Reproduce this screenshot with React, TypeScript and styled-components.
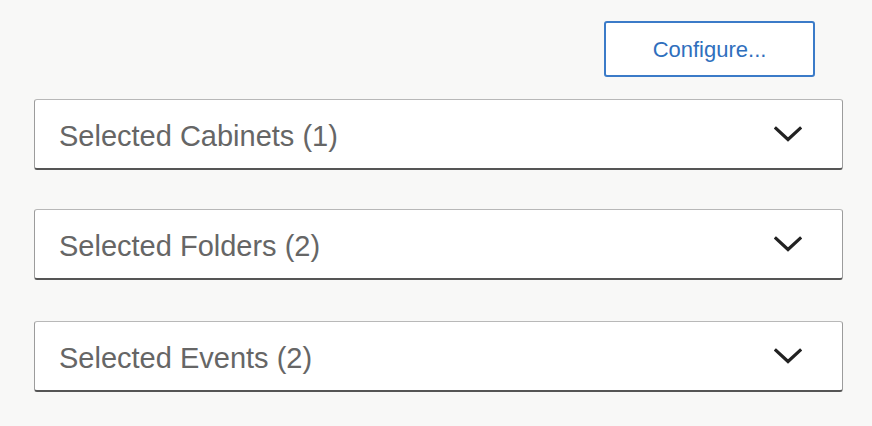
import React from "react";
import styled, { createGlobalStyle } from "styled-components";

const Global = createGlobalStyle`
  html, body { margin: 0; padding: 0; background: #f8f8f7; }
  body { font-family: "Liberation Sans", Arial, sans-serif; }
`;

const Page = styled.div`
  width: 872px;
  height: 426px;
  box-sizing: border-box;
  padding: 21px 29px 0 34px;
  display: flex;
  flex-direction: column;
`;

const Toolbar = styled.div`
  display: flex;
  justify-content: flex-end;
  padding-right: 28px;
  margin-bottom: 22px;
`;

const ConfigureButton = styled.button`
  width: 211px;
  height: 56px;
  box-sizing: border-box;
  background: #ffffff;
  border: 2px solid #3b7bc8;
  border-radius: 3px;
  color: #2f6fbd;
  font-family: "Liberation Sans", Arial, sans-serif;
  font-size: 22px;
  padding: 2px 0 0;
  cursor: pointer;
`;

const List = styled.div`
  display: flex;
  flex-direction: column;
`;

const Panel = styled.div<{ $space: number }>`
  margin-top: ${(p) => p.$space}px;
  height: 71px;
  box-sizing: border-box;
  background: #ffffff;
  border: 1px solid #9c9c9c;
  border-top-color: #b8b8b8;
  border-bottom: 2px solid #555555;
  border-radius: 3px;
  display: flex;
  align-items: center;
  justify-content: space-between;
  padding: 0 40px 0 24px;
`;

const Title = styled.span`
  font-size: 29px;
  color: #666666;
  margin-top: 5px;
`;

const Chevron = () => (
  <svg width="28" height="17" viewBox="0 0 28 17">
    <path d="M2 2.5 L14 13.5 L26 2.5" fill="none" stroke="#222" strokeWidth="3.2" strokeLinecap="square" />
  </svg>
);

const items = [
  { label: "Selected Cabinets (1)", space: 0 },
  { label: "Selected Folders (2)", space: 39 },
  { label: "Selected Events (2)", space: 41 },
];

export default function App() {
  return (
    <>
      <Global />
      <Page>
        <Toolbar>
          <ConfigureButton>Configure...</ConfigureButton>
        </Toolbar>
        <List>
          {items.map((it) => (
            <Panel key={it.label} $space={it.space}>
              <Title>{it.label}</Title>
              <Chevron />
            </Panel>
          ))}
        </List>
      </Page>
    </>
  );
}
